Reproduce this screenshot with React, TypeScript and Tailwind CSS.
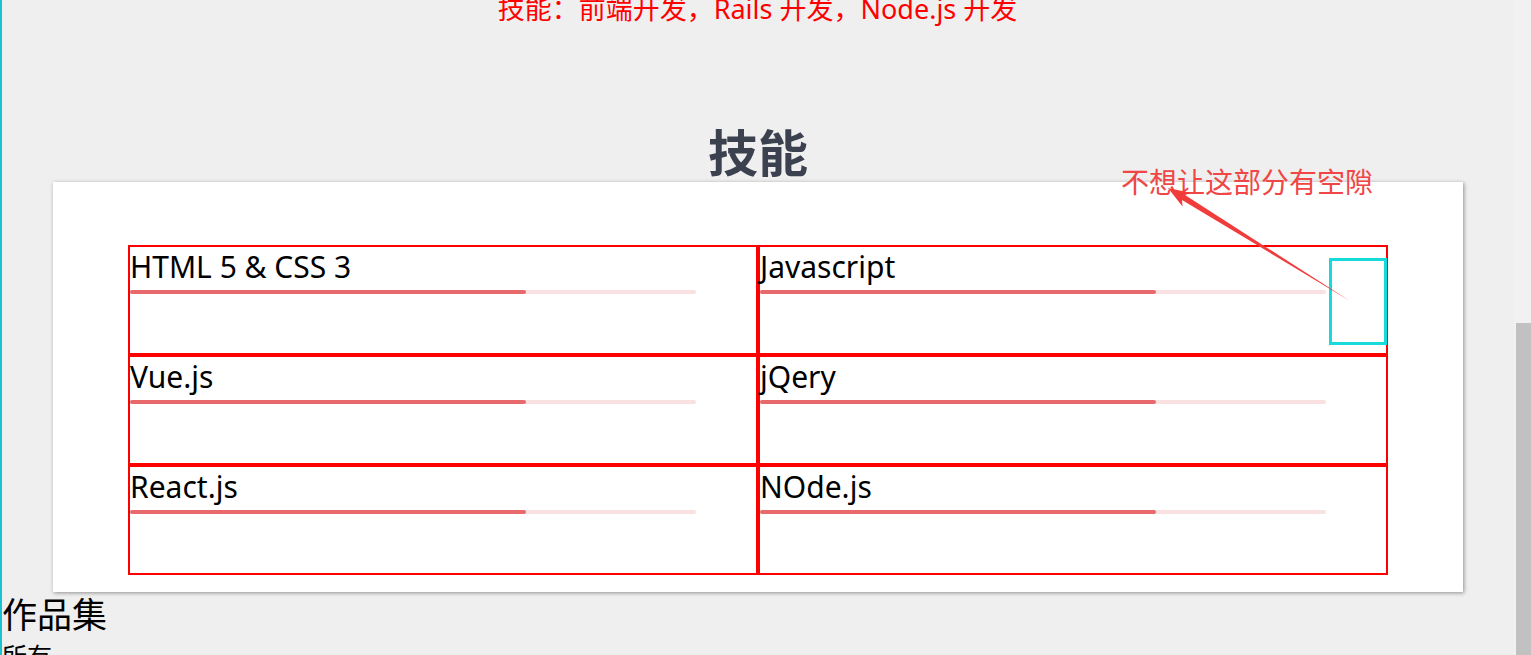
import React from "react";

const skills = [
  "HTML 5 & CSS 3",
  "Javascript",
  "Vue.js",
  "jQery",
  "React.js",
  "NOde.js",
];

function Cell({ name }: { name: string }) {
  return (
    <div className="h-[110px] border-2 border-[#ff0000] box-border">
      <div className="text-[30px] leading-[40px] text-black whitespace-nowrap">{name}</div>
      <div className="mt-[3px] w-[566px] h-[4px] rounded-full bg-[#f9e0e1]">
        <div className="w-[396px] h-full rounded-full bg-[#e7696c]" />
      </div>
    </div>
  );
}

export default function App() {
  return (
    <div
      className="relative w-[1531px] h-[655px] overflow-hidden bg-[#efefef] flex"
      style={{ fontFamily: '"Noto Sans", "Noto Sans CJK SC", sans-serif' }}
    >
      <div className="w-[1514px] shrink-0 flex flex-col">
        <div className="shrink-0 -mt-[6px] pl-[1px] text-center text-[27px] leading-[30px] text-[#ff0000] whitespace-nowrap">
          技能：前端开发，Rails 开发，Node.js 开发
        </div>
        <h2 className="shrink-0 mt-[104px] pl-[2px] text-center text-[50px] leading-[50px] font-bold text-[#3b414e]">
          技能
        </h2>
        <div className="shrink-0 mt-[4px] ml-[53px] w-[1410px] h-[410px] bg-white shadow-[1px_1px_4px_rgba(0,0,0,0.4)] pt-[63px] px-[75px]">
          <div className="grid grid-cols-2">
            {skills.map((s) => (
              <Cell key={s} name={s} />
            ))}
          </div>
        </div>
        <div className="shrink-0 mt-[3px] pl-[2px] text-[35px] leading-[40px] text-black">作品集</div>
        <div className="shrink-0 mt-[6px] pl-[2px] text-[25px] leading-[30px] text-black">所有</div>
      </div>
      <div className="w-[17px] shrink-0 bg-[#f1f1f1] flex flex-col items-end">
        <div className="h-[323px] shrink-0" />
        <div className="w-[15px] flex-1 bg-[#c1c1c1]" />
      </div>

      {/* annotations */}
      <div className="absolute left-0 top-0 w-[2px] h-full bg-[#17c3d0]" />
      <div className="absolute left-[1329px] top-[258px] w-[58px] h-[87px] border-[3px] border-[#17dada]" />
      <div
        className="absolute left-[1121px] top-[167px] text-[28px] leading-[28px] text-[#f04646] whitespace-nowrap"
        style={{ fontFamily: '"Noto Sans CJK SC", sans-serif', fontWeight: 400 }}
      >
        不想让这部分有空隙
      </div>
      <svg className="absolute left-0 top-0 pointer-events-none" width="1531" height="655">
        <polygon
          points="1168,188 1191,193 1185,195 1350,301 1182,200 1182.5,206.5"
          fill="#f23c3c"
        />
      </svg>
    </div>
  );
}
